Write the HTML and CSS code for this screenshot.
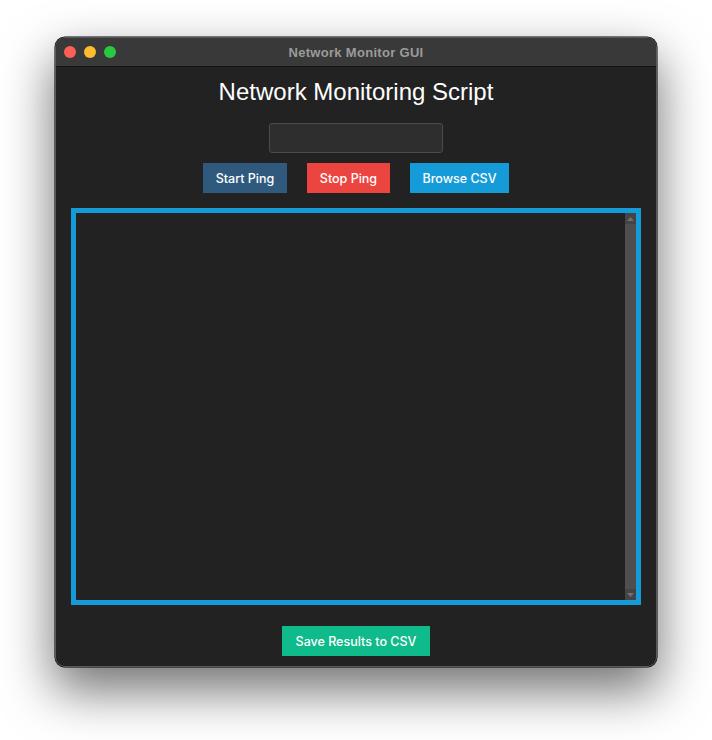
FILE: index.html
```html
<!DOCTYPE html>
<html>
<head>
<meta charset="utf-8">
<link rel="stylesheet" href="styles.css">
</head>
<body>
<div class="window">
  <div class="titlebar">
    <div class="lights">
      <span class="light red"></span>
      <span class="light yellow"></span>
      <span class="light green"></span>
    </div>
    <div class="title">Network Monitor GUI</div>
  </div>
  <div class="content">
    <h1 class="heading">Network Monitoring Script</h1>
    <div class="entry"></div>
    <div class="buttons">
      <div class="btn start">Start Ping</div>
      <div class="btn stop">Stop Ping</div>
      <div class="btn browse">Browse CSV</div>
    </div>
    <div class="output">
      <div class="text"></div>
      <div class="scrollbar">
        <div class="arrow up"><svg width="7" height="4" viewBox="0 0 7 4"><path d="M0 4 L3.5 0 L7 4 Z" fill="#707070"/></svg></div>
        <div class="track"></div>
        <div class="arrow down"><svg width="7" height="4" viewBox="0 0 7 4"><path d="M0 0 L3.5 4 L7 0 Z" fill="#707070"/></svg></div>
      </div>
    </div>
    <div class="btn save">Save Results to CSV</div>
  </div>
</div>
</body>
</html>
```

FILE: styles.css
```css
html, body {
  margin: 0;
  padding: 0;
  background: #ffffff;
}
body {
  padding: 37px 55px 0 55px;
  min-height: 740px;
  box-sizing: border-box;
  font-family: "Liberation Sans", Arial, sans-serif;
}
.window {
  width: 600px;
  height: 628px;
  border: 1px solid #5a5a5a;
  border-radius: 10px;
  background: #222222;
  overflow: hidden;
  box-shadow: 0 0 0 0.5px #000, 0 22px 50px 2px rgba(0,0,0,0.55);
  display: flex;
  flex-direction: column;
}
.titlebar {
  height: 28px;
  background: #393939;
  border-bottom: 1px solid #111;
  position: relative;
  display: flex;
  align-items: center;
  justify-content: center;
}
.lights {
  position: absolute;
  left: 8px;
  top: 8px;
  display: flex;
  gap: 8px;
}
.light {
  width: 12px;
  height: 12px;
  border-radius: 50%;
  display: block;
}
.red { background: #fe5f57; }
.yellow { background: #febc2e; }
.green { background: #28c840; }
.title {
  font-family: "Liberation Sans", Arial, sans-serif;
  font-weight: bold;
  font-size: 13px;
  letter-spacing: 0.3px;
  color: #9b9b9b;
}
.content {
  flex: 1;
  display: flex;
  flex-direction: column;
  align-items: center;
}
.heading {
  margin: 11px 0 0 0;
  font-size: 24px;
  line-height: 28px;
  font-weight: normal;
  color: #ffffff;
}
.entry {
  margin-top: 17px;
  width: 172px;
  height: 28px;
  background: #2e2e2e;
  border: 1px solid #4b4b4b;
  border-radius: 3px;
}
.buttons {
  margin-top: 10px;
  display: flex;
  gap: 20px;
}
.btn {
  height: 30px;
  display: flex;
  align-items: center;
  justify-content: center;
  color: #ffffff;
  font-size: 12.5px;
  font-weight: 500;
  font-family: Inter, "Liberation Sans", Arial, sans-serif;
}
.start { width: 84px; background: #2f5a7e; }
.stop { width: 83px; background: #ec4540; }
.browse { width: 99px; background: #169bd9; }
.output {
  margin-top: 15px;
  width: 560px;
  height: 387px;
  border: 5px solid #169bd9;
  background: #222222;
  display: flex;
}
.text { flex: 1; }
.scrollbar {
  width: 11px;
  background: #4f4f4f;
  display: flex;
  flex-direction: column;
}
.arrow {
  height: 11px;
  background: #444444;
  display: flex;
  align-items: center;
  justify-content: center;
}
.track { flex: 1; }
.save {
  margin-top: 21px;
  width: 148px;
  background: #0fba8b;
}
```
